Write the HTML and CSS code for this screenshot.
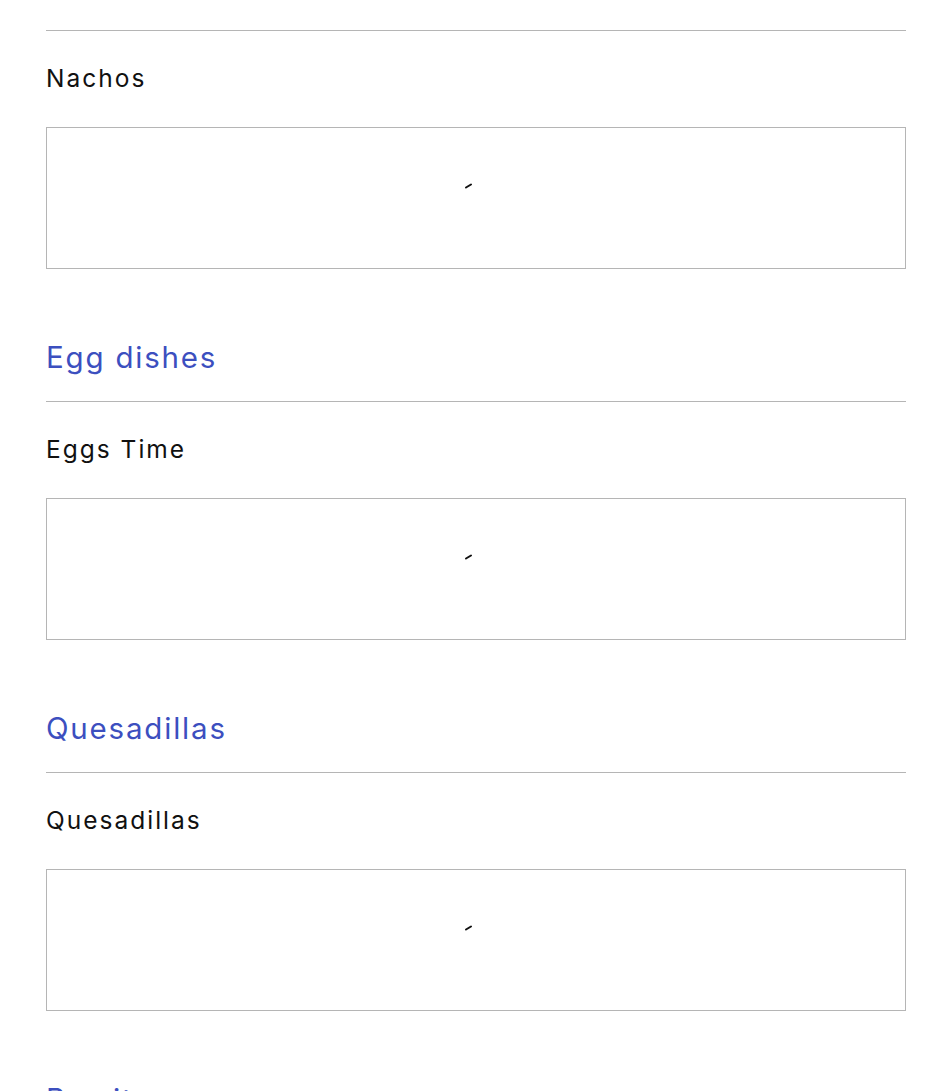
FILE: index.html
```html
<!DOCTYPE html>
<html lang="en">
<head>
<meta charset="utf-8">
<title>Menu</title>
<link rel="stylesheet" href="styles.css">
</head>
<body>
<main class="menu">
  <section class="category first">
    <div class="rule"></div>
    <h3 class="item-title">Nachos</h3>
    <div class="frame"><svg class="spinner" viewBox="0 0 12 8" width="12" height="8"><path d="M2 6.5 L7 3.5" stroke="#111" stroke-width="2" stroke-linecap="round" fill="none"/></svg></div>
  </section>
  <section class="category">
    <h2 class="cat-title">Egg dishes</h2>
    <div class="rule"></div>
    <h3 class="item-title">Eggs Time</h3>
    <div class="frame"><svg class="spinner" viewBox="0 0 12 8" width="12" height="8"><path d="M2 6.5 L7 3.5" stroke="#111" stroke-width="2" stroke-linecap="round" fill="none"/></svg></div>
  </section>
  <section class="category">
    <h2 class="cat-title">Quesadillas</h2>
    <div class="rule"></div>
    <h3 class="item-title">Quesadillas</h3>
    <div class="frame"><svg class="spinner" viewBox="0 0 12 8" width="12" height="8"><path d="M2 6.5 L7 3.5" stroke="#111" stroke-width="2" stroke-linecap="round" fill="none"/></svg></div>
  </section>
  <section class="category">
    <h2 class="cat-title">Burritos</h2>
    <div class="rule"></div>
  </section>
</main>
</body>
</html>
```
FILE: styles.css
```css
html, body {
  margin: 0;
  padding: 0;
  background: #fff;
}
body {
  font-family: Inter, "Open Sans", sans-serif;
  color: #111;
  overflow: hidden;
}
.menu {
  padding: 30px 45px 0 46px;
  display: flex;
  flex-direction: column;
}
.category {
  display: flex;
  flex-direction: column;
}
.rule {
  height: 1px;
  background: #b5b5b5;
}
.cat-title {
  margin: 68px 0 24px;
  font-size: 29.5px;
  line-height: 40px;
  font-weight: 400;
  color: #3c4fbf;
  letter-spacing: 1.8px;
}
.item-title {
  margin: 30px 0 32px;
  font-size: 24.5px;
  line-height: 34px;
  font-weight: 400;
  color: #111;
  letter-spacing: 2px;
}
.frame {
  height: 142px;
  box-sizing: border-box;
  border: 1px solid #b5b5b5;
  display: flex;
  justify-content: center;
  padding-top: 53px;
}
.spinner {
  margin-left: -12px;
}
```
